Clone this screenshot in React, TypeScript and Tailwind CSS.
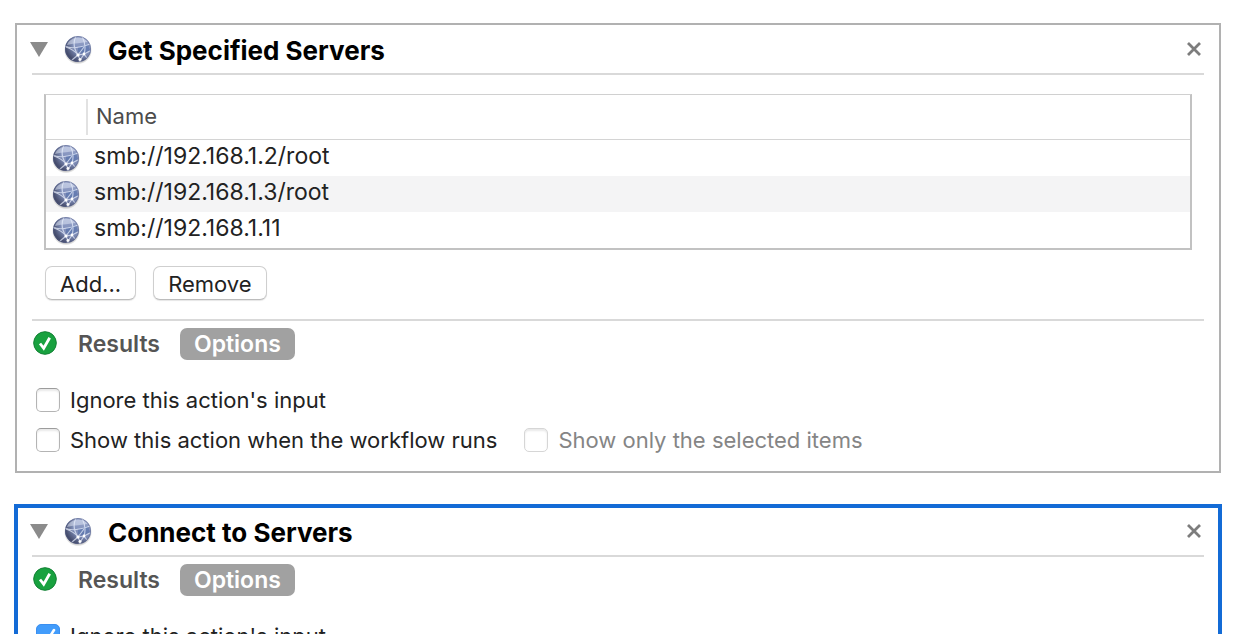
import { useState, type ReactNode } from "react";

function Globe() {
  return (
    <svg viewBox="0 0 30 30" className="size-[30px] shrink-0" aria-hidden="true">
      <defs>
        <linearGradient id="globe-base" x1="0.6" y1="0" x2="0.4" y2="1">
          <stop offset="0" stopColor="#98a5cb" />
          <stop offset="0.45" stopColor="#8493bd" />
          <stop offset="1" stopColor="#6a759e" />
        </linearGradient>
        <radialGradient id="globe-shade" cx="0.74" cy="0.36" r="0.82">
          <stop offset="0.5" stopColor="#2e334e" stopOpacity="0" />
          <stop offset="1" stopColor="#2e334e" stopOpacity="0.9" />
        </radialGradient>
        <radialGradient id="globe-shadow" cx="0.5" cy="0.5" r="0.5">
          <stop offset="0.8" stopColor="#000" stopOpacity="0.3" />
          <stop offset="1" stopColor="#000" stopOpacity="0" />
        </radialGradient>
        <clipPath id="globe-clip">
          <circle cx="15" cy="14" r="13" />
        </clipPath>
      </defs>
      <circle cx="15" cy="15.4" r="14" fill="url(#globe-shadow)" />
      <circle cx="15" cy="14" r="13" fill="url(#globe-base)" />
      <g clipPath="url(#globe-clip)">
        <circle cx="15" cy="14" r="13" fill="url(#globe-shade)" />
        <path d="M4 10C6 2 20 0 25 7C19 8 12 8 4 10Z" fill="#e3e9f8" opacity="0.5" />
        <path d="M15 12L25 9L27 15L20 19L15 17Z" fill="#5470aa" opacity="0.6" />
        <g fill="none" stroke="#e6ecfa" strokeWidth="1.1" opacity="0.75">
          <path d="M2 11C7 14 16 13 27 9" />
          <path d="M3 12C9 14 12 16 15 20L18 27" />
          <path d="M13 1C10 7 11 14 15 20" />
          <path d="M19 1C22 7 23 13 21 19L16 27" />
          <path d="M15 20L21 12" />
          <path d="M15 20L21 19L27 16" />
          <path d="M21 19L24 23" />
          <path d="M15 20L9 25" />
        </g>
        <g fill="#ffffff">
          <circle cx="15" cy="20" r="1.6" />
          <circle cx="21" cy="19" r="1.4" />
          <circle cx="17" cy="24.500" r="1.5" />
        </g>
      </g>
      <circle cx="15" cy="14" r="12.600" fill="none" stroke="#5a6488" strokeWidth="0.8" opacity="0.6" />
    </svg>
  );
}

function StatusBadge() {
  return (
    <svg viewBox="0 0 24 24" className="size-6 shrink-0" role="img" aria-label="Completed">
      <circle cx="12" cy="12" r="11.300" fill="#18a13f" stroke="#128034" strokeWidth="1" />
      <path d="M7 12.500L10.700 17.200L16.700 6.800" fill="none" stroke="#fff" strokeWidth="2.800" />
    </svg>
  );
}

function CheckOption({
  label,
  disabled = false,
  initial = false,
}: {
  label: string;
  disabled?: boolean;
  initial?: boolean;
}) {
  const [checked, setChecked] = useState(initial);
  return (
    <label className={`flex items-center gap-[10px] ${disabled ? "text-[#858585]" : "text-[#222]"}`}>
      <span className="relative flex size-6 shrink-0">
        <input
          type="checkbox"
          checked={checked}
          disabled={disabled}
          onChange={(e) => setChecked(e.target.checked)}
          className="size-6 appearance-none rounded-[5px] border border-[#b4b4b4] border-t-[#9c9c9c] bg-white shadow-[inset_0_2px_2px_rgba(0,0,0,0.09)] checked:border-[#3b8ff0] checked:bg-[#429cfb] checked:shadow-none disabled:border-[#d6d6d6]"
        />
        {checked && (
          <svg viewBox="0 0 24 24" className="pointer-events-none absolute inset-0 size-6" aria-hidden="true">
            <path d="M6 13L10.500 18L18 6" fill="none" stroke="#fff" strokeWidth="2.600" strokeLinecap="round" />
          </svg>
        )}
      </span>
      <span className="leading-6">{label}</span>
    </label>
  );
}

function CardHeader({ title }: { title: string }) {
  return (
    <header className="flex items-center pb-px">
      <button type="button" aria-label="Collapse" className="-ml-0.5 w-[18px]">
        <svg viewBox="0 0 18 15" className="h-[15px] w-[18px]" aria-hidden="true">
          <path d="M0 0H18L9 15Z" fill="#8b8b8b" />
        </svg>
      </button>
      <span className="ml-[15px] flex pt-0.5">
        <Globe />
      </span>
      <h2 className="ml-[15px] flex-1 pt-[3px] text-[26px] leading-[43px] font-bold text-black">{title}</h2>
      <button type="button" aria-label="Remove action" className="mr-[3px]">
        <svg viewBox="0 0 14 14" className="size-[14px]" aria-hidden="true">
          <path d="M1 1L13 13M13 1L1 13" stroke="#7d7d7d" strokeWidth="2.800" />
        </svg>
      </button>
    </header>
  );
}

function ResultBar() {
  return (
    <div className="flex items-center border-t-2 border-[#d9d9d9] pt-[7px] text-[23px] font-semibold">
      <span className="ml-px flex pb-0.5">
        <StatusBadge />
      </span>
      <button type="button" className="ml-[21px] leading-8 text-[#555]">
        Results
      </button>
      <button type="button" className="ml-5 rounded-[7px] bg-[#a1a1a1] px-[14px] leading-8 text-white">
        Options
      </button>
    </div>
  );
}

function PushButton({ children }: { children: ReactNode }) {
  return (
    <button
      type="button"
      className="h-[34px] rounded-[7px] border border-[#cfcfcf] border-b-[#bcbcbc] bg-white px-[14px] pt-px leading-8 text-[#222] shadow-[0_1px_1px_rgba(0,0,0,0.1)]"
    >
      {children}
    </button>
  );
}

const servers = ["smb://192.168.1.2/root", "smb://192.168.1.3/root", "smb://192.168.1.11"];

export default function App() {
  return (
    <main className="h-screen overflow-hidden bg-white px-[14px] pt-[23px] font-['Inter',sans-serif] text-[22px]">
      <section className="mx-px border-2 border-[#b1b1b1] px-[15px] pt-px pb-[19px]">
        <CardHeader title="Get Specified Servers" />
        <div className="border-t-2 border-[#d9d9d9] px-3 pt-[19px] pb-[19px]">
          <div className="border-2 border-t border-[#c2c2c2] border-t-[#d0d0d0]">
            <table className="w-full border-separate border-spacing-0 text-left">
              <thead>
                <tr className="h-[45px]">
                  <th className="w-[42px] border-b border-[#d4d4d4] p-0">
                    <div className="h-9 border-r-2 border-[#e2e2e2]" />
                  </th>
                  <th className="border-b border-[#d4d4d4] pt-0 pr-0 pb-px pl-2 font-normal text-[#4c4c4c]">
                    Name
                  </th>
                </tr>
              </thead>
              <tbody className="text-[23px] text-[#222]">
                {servers.map((server) => (
                  <tr key={server} className="h-9 even:bg-[#f4f4f5]">
                    <td className="pt-0.5 pr-0 pb-0 pl-[5px]">
                      <Globe />
                    </td>
                    <td className="pt-0 pr-0 pb-1 pl-[6px] leading-8">{server}</td>
                  </tr>
                ))}
              </tbody>
            </table>
          </div>
          <div className="mt-4 flex gap-[17px] pl-px">
            <PushButton>Add...</PushButton>
            <PushButton>Remove</PushButton>
          </div>
        </div>
        <ResultBar />
        <div className="mt-7 flex flex-col gap-4 pl-1">
          <CheckOption label="Ignore this action's input" />
          <div className="flex gap-[27px]">
            <CheckOption label="Show this action when the workflow runs" />
            <CheckOption label="Show only the selected items" disabled />
          </div>
        </div>
      </section>

      <section className="mt-[31px] border-4 border-[#136bd6] px-[14px] pb-[19px]">
        <CardHeader title="Connect to Servers" />
        <ResultBar />
        <div className="mt-7 pl-1">
          <CheckOption label="Ignore this action's input" initial />
        </div>
      </section>
    </main>
  );
}
